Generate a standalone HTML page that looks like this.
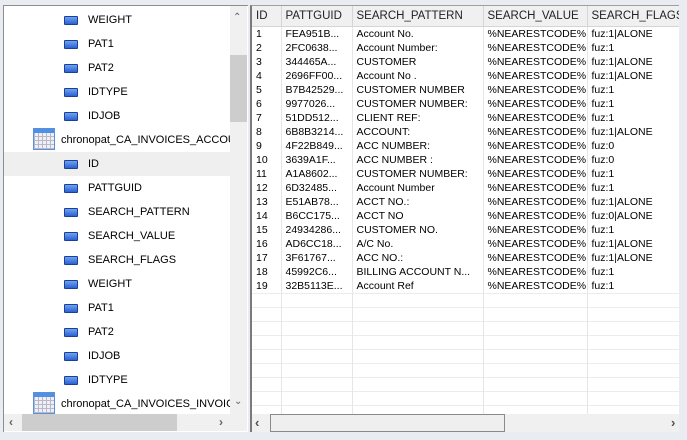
<!DOCTYPE html>
<html><head><meta charset="utf-8"><style>
*{margin:0;padding:0;box-sizing:border-box}
body{width:687px;height:440px;background:#e9ecf0;font-family:"Liberation Sans",Tahoma,sans-serif;font-size:11px;color:#000;position:relative;overflow:hidden}
.abs{position:absolute}
#lp{left:3px;top:5px;width:245px;height:427px;background:#fff;border-left:1px solid #8e8e8e;border-top:1px solid #8e8e8e;overflow:hidden}
.tr{position:absolute;left:0;width:226px;height:24px;line-height:24px;white-space:nowrap;overflow:hidden}
.fi{position:absolute;left:60px;top:8px;width:14px;height:9px;border:1px solid #1b3f9a;background:linear-gradient(#6fa3ee,#2a62d0);border-radius:1px}
.tx{position:absolute;left:84px}
.ti{position:absolute;left:29px;top:0;width:22px;height:22px;border:1px solid #5b8fd6;background:#fff;background-image:linear-gradient(#4f90e6,#4f90e6),repeating-linear-gradient(90deg,#b8b8c8 0 1px,transparent 1px 4px),repeating-linear-gradient(0deg,#b8b8c8 0 1px,#eef0f6 1px 4px);background-size:100% 4px,100% 100%,100% 100%;background-repeat:no-repeat}
.tt{position:absolute;left:57px}
#rp{left:250px;top:5px;width:429px;height:427px;background:#fff;border-left:2px solid #7a7a7a;border-top:1px solid #a0a0a0;overflow:hidden}
table{border-collapse:collapse;position:absolute;left:0;top:0;table-layout:fixed;width:440px}
th{height:20px;background:#f0f0f0;font-weight:normal;text-align:left;padding-left:4px;border-right:1px solid #d5d5d5;border-bottom:1px solid #d5d5d5;color:#222;font-size:11.5px;white-space:nowrap;overflow:hidden}
td{height:14px;line-height:14px;padding-left:4px;border-right:1px solid #e6e6e6;white-space:nowrap;overflow:hidden;font-size:10.5px}
tr.e td{border-top:1px solid #ececec;height:14px}
</style></head><body>
<div id="lp" class="abs">
 <div class="tr" style="top:2px"><div class="fi"></div><span class="tx">WEIGHT</span></div>
 <div class="tr" style="top:26px"><div class="fi"></div><span class="tx">PAT1</span></div>
 <div class="tr" style="top:50px"><div class="fi"></div><span class="tx">PAT2</span></div>
 <div class="tr" style="top:74px"><div class="fi"></div><span class="tx">IDTYPE</span></div>
 <div class="tr" style="top:98px"><div class="fi"></div><span class="tx">IDJOB</span></div>
 <div class="tr" style="top:122px"><div class="ti"></div><span class="tt">chronopat_CA_INVOICES_ACCOUNT</span></div>
 <div class="tr" style="top:146px;background:#efefef"><div class="fi"></div><span class="tx">ID</span></div>
 <div class="tr" style="top:170px"><div class="fi"></div><span class="tx">PATTGUID</span></div>
 <div class="tr" style="top:194px"><div class="fi"></div><span class="tx">SEARCH_PATTERN</span></div>
 <div class="tr" style="top:218px"><div class="fi"></div><span class="tx">SEARCH_VALUE</span></div>
 <div class="tr" style="top:242px"><div class="fi"></div><span class="tx">SEARCH_FLAGS</span></div>
 <div class="tr" style="top:266px"><div class="fi"></div><span class="tx">WEIGHT</span></div>
 <div class="tr" style="top:290px"><div class="fi"></div><span class="tx">PAT1</span></div>
 <div class="tr" style="top:314px"><div class="fi"></div><span class="tx">PAT2</span></div>
 <div class="tr" style="top:338px"><div class="fi"></div><span class="tx">IDJOB</span></div>
 <div class="tr" style="top:362px"><div class="fi"></div><span class="tx">IDTYPE</span></div>
 <div class="tr" style="top:386px"><div class="ti"></div><span class="tt">chronopat_CA_INVOICES_INVOICE</span></div>
 <div class="abs" style="left:226px;top:0;width:17px;height:408px;background:#f0f0f0"></div>
 <div class="abs" style="left:226px;top:49px;width:17px;height:67px;background:#cdcdcd"></div>
 <div class="abs" style="left:229px;top:6px;color:#606060;font-size:10px">&#8963;</div>
 <div class="abs" style="left:230px;top:390px;color:#606060;font-size:10px">&#8964;</div>
 <div class="abs" style="left:0;top:408px;width:226px;height:17px;background:#f0f0f0"></div>
 <div class="abs" style="left:18px;top:408px;width:155px;height:17px;background:#cdcdcd"></div>
 <div class="abs" style="left:5px;top:409px;color:#606060;font-size:12px;font-weight:bold">&#8249;</div>
 <div class="abs" style="left:215px;top:409px;color:#606060;font-size:12px;font-weight:bold">&#8250;</div>
 <div class="abs" style="left:226px;top:408px;width:17px;height:17px;background:#f0f0f0"></div>
</div>
<div id="rp" class="abs">
<table>
<colgroup><col style="width:29px"><col style="width:71px"><col style="width:131px"><col style="width:104px"><col style="width:105px"></colgroup>
<tr><th>ID</th><th>PATTGUID</th><th>SEARCH_PATTERN</th><th>SEARCH_VALUE</th><th>SEARCH_FLAGS</th></tr>
<tr><td>1</td><td>FEA951B...</td><td>Account No.</td><td>%NEARESTCODE%</td><td>fuz:1|ALONE</td></tr>
<tr><td>2</td><td>2FC0638...</td><td>Account Number:</td><td>%NEARESTCODE%</td><td>fuz:1</td></tr>
<tr><td>3</td><td>344465A...</td><td>CUSTOMER</td><td>%NEARESTCODE%</td><td>fuz:1|ALONE</td></tr>
<tr><td>4</td><td>2696FF00...</td><td>Account No .</td><td>%NEARESTCODE%</td><td>fuz:1|ALONE</td></tr>
<tr><td>5</td><td>B7B42529...</td><td>CUSTOMER NUMBER</td><td>%NEARESTCODE%</td><td>fuz:1</td></tr>
<tr><td>6</td><td>9977026...</td><td>CUSTOMER NUMBER:</td><td>%NEARESTCODE%</td><td>fuz:1</td></tr>
<tr><td>7</td><td>51DD512...</td><td>CLIENT REF:</td><td>%NEARESTCODE%</td><td>fuz:1</td></tr>
<tr><td>8</td><td>6B8B3214...</td><td>ACCOUNT:</td><td>%NEARESTCODE%</td><td>fuz:1|ALONE</td></tr>
<tr><td>9</td><td>4F22B849...</td><td>ACC NUMBER:</td><td>%NEARESTCODE%</td><td>fuz:0</td></tr>
<tr><td>10</td><td>3639A1F...</td><td>ACC NUMBER :</td><td>%NEARESTCODE%</td><td>fuz:0</td></tr>
<tr><td>11</td><td>A1A8602...</td><td>CUSTOMER NUMBER:</td><td>%NEARESTCODE%</td><td>fuz:1</td></tr>
<tr><td>12</td><td>6D32485...</td><td>Account Number</td><td>%NEARESTCODE%</td><td>fuz:1</td></tr>
<tr><td>13</td><td>E51AB78...</td><td>ACCT NO.:</td><td>%NEARESTCODE%</td><td>fuz:1|ALONE</td></tr>
<tr><td>14</td><td>B6CC175...</td><td>ACCT NO</td><td>%NEARESTCODE%</td><td>fuz:0|ALONE</td></tr>
<tr><td>15</td><td>24934286...</td><td>CUSTOMER NO.</td><td>%NEARESTCODE%</td><td>fuz:1</td></tr>
<tr><td>16</td><td>AD6CC18...</td><td>A/C No.</td><td>%NEARESTCODE%</td><td>fuz:1|ALONE</td></tr>
<tr><td>17</td><td>3F61767...</td><td>ACC NO.:</td><td>%NEARESTCODE%</td><td>fuz:1|ALONE</td></tr>
<tr><td>18</td><td>45992C6...</td><td>BILLING ACCOUNT N...</td><td>%NEARESTCODE%</td><td>fuz:1</td></tr>
<tr><td>19</td><td>32B5113E...</td><td>Account Ref</td><td>%NEARESTCODE%</td><td>fuz:1</td></tr>
<tr class="e"><td></td><td></td><td></td><td></td><td></td></tr>
<tr class="e"><td></td><td></td><td></td><td></td><td></td></tr>
<tr class="e"><td></td><td></td><td></td><td></td><td></td></tr>
<tr class="e"><td></td><td></td><td></td><td></td><td></td></tr>
<tr class="e"><td></td><td></td><td></td><td></td><td></td></tr>
<tr class="e"><td></td><td></td><td></td><td></td><td></td></tr>
<tr class="e"><td></td><td></td><td></td><td></td><td></td></tr>
<tr class="e"><td></td><td></td><td></td><td></td><td></td></tr>
<tr class="e"><td></td><td></td><td></td><td></td><td></td></tr>
<tr class="e"><td></td><td></td><td></td><td></td><td></td></tr>
<tr class="e"><td></td><td></td><td></td><td></td><td></td></tr>
</table>
 <div class="abs" style="left:0;top:408px;width:427px;height:19px;background:#f0f0f0"></div>
 <div class="abs" style="left:18px;top:408px;width:235px;height:18px;background:#efefef;border:1px solid #8a8a8a"></div>
 <div class="abs" style="left:3px;top:409px;color:#505050;font-size:13px;font-weight:bold">&#8249;</div>
 <div class="abs" style="left:419px;top:409px;color:#505050;font-size:13px;font-weight:bold">&#8250;</div>
</div>
</body></html>
